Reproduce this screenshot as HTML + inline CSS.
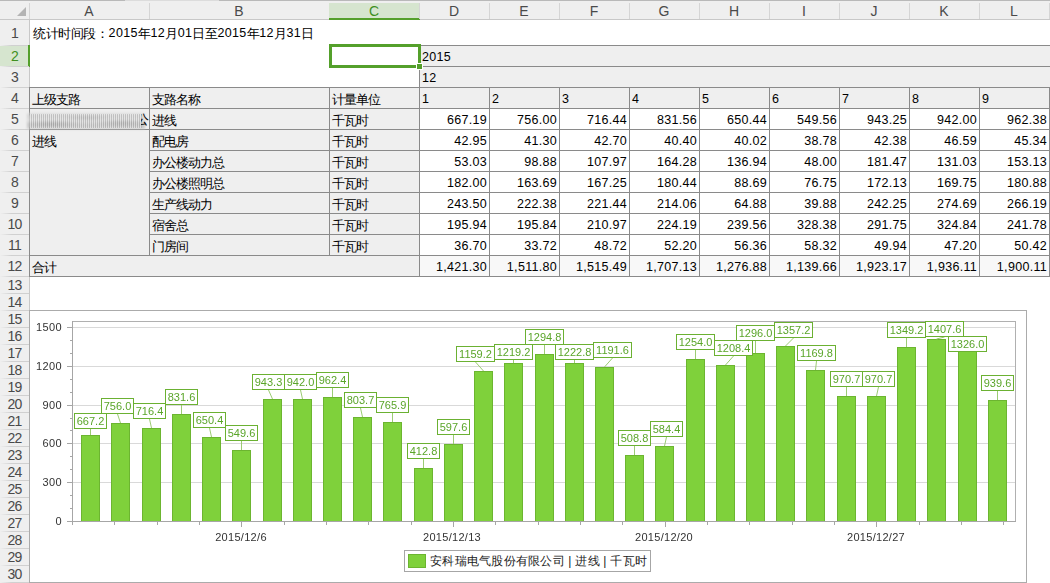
<!DOCTYPE html><html><head><meta charset="utf-8"><style>
html,body{margin:0;padding:0;} body{width:1050px;height:583px;overflow:hidden;position:relative;background:#fff;font-family:"Liberation Sans", sans-serif;}
div{box-sizing:border-box;}
.hd{color:#444;font-size:13px;}
.n{font-size:12.5px;position:relative;top:-1px;letter-spacing:0.3px;} .r1 .n{letter-spacing:0.35px;} .r1 .k{letter-spacing:-0.4px;} .k{font-size:13px;letter-spacing:-1px;}
</style></head><body>
<div style="position:absolute;left:0px;top:0px;width:1050px;height:1px;background:#b9b9b9"></div>
<div style="position:absolute;left:125px;top:0px;width:94px;height:1px;background:#dcdcdc"></div>
<div style="position:absolute;left:0px;top:1px;width:1050px;height:18px;background:#efefef"></div>
<div style="position:absolute;left:0px;top:19px;width:1050px;height:1px;background:#c8c8c8"></div>
<div style="position:absolute;left:0px;top:20px;width:29px;height:563px;background:#efefef"></div>
<div style="position:absolute;left:29px;top:20px;width:1px;height:563px;background:#c8c8c8"></div>
<div style="position:absolute;left:29px;top:3px;width:1px;height:16px;background:#d5d5d5"></div>
<svg style="position:absolute;left:17px;top:7px" width="9" height="9"><polygon points="9,0 9,9 0,9" fill="#b4b4b4"/></svg>
<div style="position:absolute;left:149px;top:3px;width:1px;height:16px;background:#d5d5d5"></div>
<div style="position:absolute;left:29px;top:2px;white-space:nowrap;color:#4a4a4a;font-size:14px;width:120px;height:19px;line-height:19px;text-align:center;">A</div>
<div style="position:absolute;left:329px;top:3px;width:1px;height:16px;background:#d5d5d5"></div>
<div style="position:absolute;left:149px;top:2px;white-space:nowrap;color:#4a4a4a;font-size:14px;width:180px;height:19px;line-height:19px;text-align:center;">B</div>
<div style="position:absolute;left:329px;top:3px;width:90px;height:15px;background:#d6e5cf"></div>
<div style="position:absolute;left:329px;top:18px;width:91px;height:2px;background:#54a02b"></div>
<div style="position:absolute;left:419px;top:3px;width:1px;height:16px;background:#d5d5d5"></div>
<div style="position:absolute;left:329px;top:2px;white-space:nowrap;color:#3f8f1f;font-size:14px;width:90px;height:19px;line-height:19px;text-align:center;">C</div>
<div style="position:absolute;left:489px;top:3px;width:1px;height:16px;background:#d5d5d5"></div>
<div style="position:absolute;left:419px;top:2px;white-space:nowrap;color:#4a4a4a;font-size:14px;width:70px;height:19px;line-height:19px;text-align:center;">D</div>
<div style="position:absolute;left:559px;top:3px;width:1px;height:16px;background:#d5d5d5"></div>
<div style="position:absolute;left:489px;top:2px;white-space:nowrap;color:#4a4a4a;font-size:14px;width:70px;height:19px;line-height:19px;text-align:center;">E</div>
<div style="position:absolute;left:629px;top:3px;width:1px;height:16px;background:#d5d5d5"></div>
<div style="position:absolute;left:559px;top:2px;white-space:nowrap;color:#4a4a4a;font-size:14px;width:70px;height:19px;line-height:19px;text-align:center;">F</div>
<div style="position:absolute;left:699px;top:3px;width:1px;height:16px;background:#d5d5d5"></div>
<div style="position:absolute;left:629px;top:2px;white-space:nowrap;color:#4a4a4a;font-size:14px;width:70px;height:19px;line-height:19px;text-align:center;">G</div>
<div style="position:absolute;left:769px;top:3px;width:1px;height:16px;background:#d5d5d5"></div>
<div style="position:absolute;left:699px;top:2px;white-space:nowrap;color:#4a4a4a;font-size:14px;width:70px;height:19px;line-height:19px;text-align:center;">H</div>
<div style="position:absolute;left:839px;top:3px;width:1px;height:16px;background:#d5d5d5"></div>
<div style="position:absolute;left:769px;top:2px;white-space:nowrap;color:#4a4a4a;font-size:14px;width:70px;height:19px;line-height:19px;text-align:center;">I</div>
<div style="position:absolute;left:909px;top:3px;width:1px;height:16px;background:#d5d5d5"></div>
<div style="position:absolute;left:839px;top:2px;white-space:nowrap;color:#4a4a4a;font-size:14px;width:70px;height:19px;line-height:19px;text-align:center;">J</div>
<div style="position:absolute;left:979px;top:3px;width:1px;height:16px;background:#d5d5d5"></div>
<div style="position:absolute;left:909px;top:2px;white-space:nowrap;color:#4a4a4a;font-size:14px;width:70px;height:19px;line-height:19px;text-align:center;">K</div>
<div style="position:absolute;left:1049px;top:3px;width:1px;height:16px;background:#d5d5d5"></div>
<div style="position:absolute;left:979px;top:2px;white-space:nowrap;color:#4a4a4a;font-size:14px;width:70px;height:19px;line-height:19px;text-align:center;">L</div>
<div style="position:absolute;left:0px;top:45px;width:29px;height:1px;background:linear-gradient(90deg,#efefef,#d0d0d0 40%,#d0d0d0)"></div>
<div style="position:absolute;left:0px;top:20px;white-space:nowrap;color:#4a4a4a;font-size:14px;letter-spacing:-0.8px;width:29px;height:26px;line-height:26px;text-align:center;">1</div>
<div style="position:absolute;left:0px;top:46px;width:28px;height:20px;background:#d6e5cf"></div>
<div style="position:absolute;left:28px;top:45px;width:2px;height:22px;background:#54a02b"></div>
<div style="position:absolute;left:0px;top:66px;width:29px;height:1px;background:linear-gradient(90deg,#efefef,#d0d0d0 40%,#d0d0d0)"></div>
<div style="position:absolute;left:0px;top:46px;white-space:nowrap;color:#3f8f1f;font-size:14px;letter-spacing:-0.8px;width:29px;height:21px;line-height:21px;text-align:center;">2</div>
<div style="position:absolute;left:0px;top:87px;width:29px;height:1px;background:linear-gradient(90deg,#efefef,#d0d0d0 40%,#d0d0d0)"></div>
<div style="position:absolute;left:0px;top:67px;white-space:nowrap;color:#4a4a4a;font-size:14px;letter-spacing:-0.8px;width:29px;height:21px;line-height:21px;text-align:center;">3</div>
<div style="position:absolute;left:0px;top:108px;width:29px;height:1px;background:linear-gradient(90deg,#efefef,#d0d0d0 40%,#d0d0d0)"></div>
<div style="position:absolute;left:0px;top:88px;white-space:nowrap;color:#4a4a4a;font-size:14px;letter-spacing:-0.8px;width:29px;height:21px;line-height:21px;text-align:center;">4</div>
<div style="position:absolute;left:0px;top:129px;width:29px;height:1px;background:linear-gradient(90deg,#efefef,#d0d0d0 40%,#d0d0d0)"></div>
<div style="position:absolute;left:0px;top:109px;white-space:nowrap;color:#4a4a4a;font-size:14px;letter-spacing:-0.8px;width:29px;height:21px;line-height:21px;text-align:center;">5</div>
<div style="position:absolute;left:0px;top:150px;width:29px;height:1px;background:linear-gradient(90deg,#efefef,#d0d0d0 40%,#d0d0d0)"></div>
<div style="position:absolute;left:0px;top:130px;white-space:nowrap;color:#4a4a4a;font-size:14px;letter-spacing:-0.8px;width:29px;height:21px;line-height:21px;text-align:center;">6</div>
<div style="position:absolute;left:0px;top:171px;width:29px;height:1px;background:linear-gradient(90deg,#efefef,#d0d0d0 40%,#d0d0d0)"></div>
<div style="position:absolute;left:0px;top:151px;white-space:nowrap;color:#4a4a4a;font-size:14px;letter-spacing:-0.8px;width:29px;height:21px;line-height:21px;text-align:center;">7</div>
<div style="position:absolute;left:0px;top:192px;width:29px;height:1px;background:linear-gradient(90deg,#efefef,#d0d0d0 40%,#d0d0d0)"></div>
<div style="position:absolute;left:0px;top:172px;white-space:nowrap;color:#4a4a4a;font-size:14px;letter-spacing:-0.8px;width:29px;height:21px;line-height:21px;text-align:center;">8</div>
<div style="position:absolute;left:0px;top:213px;width:29px;height:1px;background:linear-gradient(90deg,#efefef,#d0d0d0 40%,#d0d0d0)"></div>
<div style="position:absolute;left:0px;top:193px;white-space:nowrap;color:#4a4a4a;font-size:14px;letter-spacing:-0.8px;width:29px;height:21px;line-height:21px;text-align:center;">9</div>
<div style="position:absolute;left:0px;top:234px;width:29px;height:1px;background:linear-gradient(90deg,#efefef,#d0d0d0 40%,#d0d0d0)"></div>
<div style="position:absolute;left:0px;top:214px;white-space:nowrap;color:#4a4a4a;font-size:14px;letter-spacing:-0.8px;width:29px;height:21px;line-height:21px;text-align:center;">10</div>
<div style="position:absolute;left:0px;top:255px;width:29px;height:1px;background:linear-gradient(90deg,#efefef,#d0d0d0 40%,#d0d0d0)"></div>
<div style="position:absolute;left:0px;top:235px;white-space:nowrap;color:#4a4a4a;font-size:14px;letter-spacing:-0.8px;width:29px;height:21px;line-height:21px;text-align:center;">11</div>
<div style="position:absolute;left:0px;top:276px;width:29px;height:1px;background:linear-gradient(90deg,#efefef,#d0d0d0 40%,#d0d0d0)"></div>
<div style="position:absolute;left:0px;top:256px;white-space:nowrap;color:#4a4a4a;font-size:14px;letter-spacing:-0.8px;width:29px;height:21px;line-height:21px;text-align:center;">12</div>
<div style="position:absolute;left:0px;top:293px;width:29px;height:1px;background:linear-gradient(90deg,#efefef,#d0d0d0 40%,#d0d0d0)"></div>
<div style="position:absolute;left:0px;top:277px;white-space:nowrap;color:#4a4a4a;font-size:14px;letter-spacing:-0.8px;width:29px;height:17px;line-height:17px;text-align:center;">13</div>
<div style="position:absolute;left:0px;top:310px;width:29px;height:1px;background:linear-gradient(90deg,#efefef,#d0d0d0 40%,#d0d0d0)"></div>
<div style="position:absolute;left:0px;top:294px;white-space:nowrap;color:#4a4a4a;font-size:14px;letter-spacing:-0.8px;width:29px;height:17px;line-height:17px;text-align:center;">14</div>
<div style="position:absolute;left:0px;top:327px;width:29px;height:1px;background:linear-gradient(90deg,#efefef,#d0d0d0 40%,#d0d0d0)"></div>
<div style="position:absolute;left:0px;top:311px;white-space:nowrap;color:#4a4a4a;font-size:14px;letter-spacing:-0.8px;width:29px;height:17px;line-height:17px;text-align:center;">15</div>
<div style="position:absolute;left:0px;top:344px;width:29px;height:1px;background:linear-gradient(90deg,#efefef,#d0d0d0 40%,#d0d0d0)"></div>
<div style="position:absolute;left:0px;top:328px;white-space:nowrap;color:#4a4a4a;font-size:14px;letter-spacing:-0.8px;width:29px;height:17px;line-height:17px;text-align:center;">16</div>
<div style="position:absolute;left:0px;top:361px;width:29px;height:1px;background:linear-gradient(90deg,#efefef,#d0d0d0 40%,#d0d0d0)"></div>
<div style="position:absolute;left:0px;top:345px;white-space:nowrap;color:#4a4a4a;font-size:14px;letter-spacing:-0.8px;width:29px;height:17px;line-height:17px;text-align:center;">17</div>
<div style="position:absolute;left:0px;top:378px;width:29px;height:1px;background:linear-gradient(90deg,#efefef,#d0d0d0 40%,#d0d0d0)"></div>
<div style="position:absolute;left:0px;top:362px;white-space:nowrap;color:#4a4a4a;font-size:14px;letter-spacing:-0.8px;width:29px;height:17px;line-height:17px;text-align:center;">18</div>
<div style="position:absolute;left:0px;top:395px;width:29px;height:1px;background:linear-gradient(90deg,#efefef,#d0d0d0 40%,#d0d0d0)"></div>
<div style="position:absolute;left:0px;top:379px;white-space:nowrap;color:#4a4a4a;font-size:14px;letter-spacing:-0.8px;width:29px;height:17px;line-height:17px;text-align:center;">19</div>
<div style="position:absolute;left:0px;top:412px;width:29px;height:1px;background:linear-gradient(90deg,#efefef,#d0d0d0 40%,#d0d0d0)"></div>
<div style="position:absolute;left:0px;top:396px;white-space:nowrap;color:#4a4a4a;font-size:14px;letter-spacing:-0.8px;width:29px;height:17px;line-height:17px;text-align:center;">20</div>
<div style="position:absolute;left:0px;top:429px;width:29px;height:1px;background:linear-gradient(90deg,#efefef,#d0d0d0 40%,#d0d0d0)"></div>
<div style="position:absolute;left:0px;top:413px;white-space:nowrap;color:#4a4a4a;font-size:14px;letter-spacing:-0.8px;width:29px;height:17px;line-height:17px;text-align:center;">21</div>
<div style="position:absolute;left:0px;top:446px;width:29px;height:1px;background:linear-gradient(90deg,#efefef,#d0d0d0 40%,#d0d0d0)"></div>
<div style="position:absolute;left:0px;top:430px;white-space:nowrap;color:#4a4a4a;font-size:14px;letter-spacing:-0.8px;width:29px;height:17px;line-height:17px;text-align:center;">22</div>
<div style="position:absolute;left:0px;top:463px;width:29px;height:1px;background:linear-gradient(90deg,#efefef,#d0d0d0 40%,#d0d0d0)"></div>
<div style="position:absolute;left:0px;top:447px;white-space:nowrap;color:#4a4a4a;font-size:14px;letter-spacing:-0.8px;width:29px;height:17px;line-height:17px;text-align:center;">23</div>
<div style="position:absolute;left:0px;top:480px;width:29px;height:1px;background:linear-gradient(90deg,#efefef,#d0d0d0 40%,#d0d0d0)"></div>
<div style="position:absolute;left:0px;top:464px;white-space:nowrap;color:#4a4a4a;font-size:14px;letter-spacing:-0.8px;width:29px;height:17px;line-height:17px;text-align:center;">24</div>
<div style="position:absolute;left:0px;top:497px;width:29px;height:1px;background:linear-gradient(90deg,#efefef,#d0d0d0 40%,#d0d0d0)"></div>
<div style="position:absolute;left:0px;top:481px;white-space:nowrap;color:#4a4a4a;font-size:14px;letter-spacing:-0.8px;width:29px;height:17px;line-height:17px;text-align:center;">25</div>
<div style="position:absolute;left:0px;top:514px;width:29px;height:1px;background:linear-gradient(90deg,#efefef,#d0d0d0 40%,#d0d0d0)"></div>
<div style="position:absolute;left:0px;top:498px;white-space:nowrap;color:#4a4a4a;font-size:14px;letter-spacing:-0.8px;width:29px;height:17px;line-height:17px;text-align:center;">26</div>
<div style="position:absolute;left:0px;top:531px;width:29px;height:1px;background:linear-gradient(90deg,#efefef,#d0d0d0 40%,#d0d0d0)"></div>
<div style="position:absolute;left:0px;top:515px;white-space:nowrap;color:#4a4a4a;font-size:14px;letter-spacing:-0.8px;width:29px;height:17px;line-height:17px;text-align:center;">27</div>
<div style="position:absolute;left:0px;top:548px;width:29px;height:1px;background:linear-gradient(90deg,#efefef,#d0d0d0 40%,#d0d0d0)"></div>
<div style="position:absolute;left:0px;top:532px;white-space:nowrap;color:#4a4a4a;font-size:14px;letter-spacing:-0.8px;width:29px;height:17px;line-height:17px;text-align:center;">28</div>
<div style="position:absolute;left:0px;top:565px;width:29px;height:1px;background:linear-gradient(90deg,#efefef,#d0d0d0 40%,#d0d0d0)"></div>
<div style="position:absolute;left:0px;top:549px;white-space:nowrap;color:#4a4a4a;font-size:14px;letter-spacing:-0.8px;width:29px;height:17px;line-height:17px;text-align:center;">29</div>
<div style="position:absolute;left:0px;top:582px;width:29px;height:1px;background:linear-gradient(90deg,#efefef,#d0d0d0 40%,#d0d0d0)"></div>
<div style="position:absolute;left:0px;top:566px;white-space:nowrap;color:#4a4a4a;font-size:14px;letter-spacing:-0.8px;width:29px;height:17px;line-height:17px;text-align:center;">30</div>
<div style="position:absolute;left:419px;top:45px;width:640px;height:22px;background:#efefef;border:1px solid #8a8a8a"></div>
<div style="position:absolute;left:419px;top:66px;width:640px;height:22px;background:#efefef;border:1px solid #8a8a8a"></div>
<div style="position:absolute;left:29px;top:87px;width:121px;height:22px;background:#efefef;border:1px solid #8a8a8a"></div>
<div style="position:absolute;left:149px;top:87px;width:181px;height:22px;background:#efefef;border:1px solid #8a8a8a"></div>
<div style="position:absolute;left:329px;top:87px;width:91px;height:22px;background:#efefef;border:1px solid #8a8a8a"></div>
<div style="position:absolute;left:419px;top:87px;width:71px;height:22px;background:#efefef;border:1px solid #8a8a8a"></div>
<div style="position:absolute;left:489px;top:87px;width:71px;height:22px;background:#efefef;border:1px solid #8a8a8a"></div>
<div style="position:absolute;left:559px;top:87px;width:71px;height:22px;background:#efefef;border:1px solid #8a8a8a"></div>
<div style="position:absolute;left:629px;top:87px;width:71px;height:22px;background:#efefef;border:1px solid #8a8a8a"></div>
<div style="position:absolute;left:699px;top:87px;width:71px;height:22px;background:#efefef;border:1px solid #8a8a8a"></div>
<div style="position:absolute;left:769px;top:87px;width:71px;height:22px;background:#efefef;border:1px solid #8a8a8a"></div>
<div style="position:absolute;left:839px;top:87px;width:71px;height:22px;background:#efefef;border:1px solid #8a8a8a"></div>
<div style="position:absolute;left:909px;top:87px;width:71px;height:22px;background:#efefef;border:1px solid #8a8a8a"></div>
<div style="position:absolute;left:979px;top:87px;width:71px;height:22px;background:#efefef;border:1px solid #8a8a8a"></div>
<div style="position:absolute;left:29px;top:108px;width:121px;height:22px;background:#efefef;border:1px solid #8a8a8a"></div>
<div style="position:absolute;left:29px;top:129px;width:121px;height:127px;background:#efefef;border:1px solid #8a8a8a"></div>
<div style="position:absolute;left:149px;top:108px;width:181px;height:22px;background:#efefef;border:1px solid #8a8a8a"></div>
<div style="position:absolute;left:329px;top:108px;width:91px;height:22px;background:#efefef;border:1px solid #8a8a8a"></div>
<div style="position:absolute;left:419px;top:108px;width:71px;height:22px;background:#fff;border:1px solid #8a8a8a"></div>
<div style="position:absolute;left:489px;top:108px;width:71px;height:22px;background:#fff;border:1px solid #8a8a8a"></div>
<div style="position:absolute;left:559px;top:108px;width:71px;height:22px;background:#fff;border:1px solid #8a8a8a"></div>
<div style="position:absolute;left:629px;top:108px;width:71px;height:22px;background:#fff;border:1px solid #8a8a8a"></div>
<div style="position:absolute;left:699px;top:108px;width:71px;height:22px;background:#fff;border:1px solid #8a8a8a"></div>
<div style="position:absolute;left:769px;top:108px;width:71px;height:22px;background:#fff;border:1px solid #8a8a8a"></div>
<div style="position:absolute;left:839px;top:108px;width:71px;height:22px;background:#fff;border:1px solid #8a8a8a"></div>
<div style="position:absolute;left:909px;top:108px;width:71px;height:22px;background:#fff;border:1px solid #8a8a8a"></div>
<div style="position:absolute;left:979px;top:108px;width:71px;height:22px;background:#fff;border:1px solid #8a8a8a"></div>
<div style="position:absolute;left:149px;top:129px;width:181px;height:22px;background:#efefef;border:1px solid #8a8a8a"></div>
<div style="position:absolute;left:329px;top:129px;width:91px;height:22px;background:#efefef;border:1px solid #8a8a8a"></div>
<div style="position:absolute;left:419px;top:129px;width:71px;height:22px;background:#fff;border:1px solid #8a8a8a"></div>
<div style="position:absolute;left:489px;top:129px;width:71px;height:22px;background:#fff;border:1px solid #8a8a8a"></div>
<div style="position:absolute;left:559px;top:129px;width:71px;height:22px;background:#fff;border:1px solid #8a8a8a"></div>
<div style="position:absolute;left:629px;top:129px;width:71px;height:22px;background:#fff;border:1px solid #8a8a8a"></div>
<div style="position:absolute;left:699px;top:129px;width:71px;height:22px;background:#fff;border:1px solid #8a8a8a"></div>
<div style="position:absolute;left:769px;top:129px;width:71px;height:22px;background:#fff;border:1px solid #8a8a8a"></div>
<div style="position:absolute;left:839px;top:129px;width:71px;height:22px;background:#fff;border:1px solid #8a8a8a"></div>
<div style="position:absolute;left:909px;top:129px;width:71px;height:22px;background:#fff;border:1px solid #8a8a8a"></div>
<div style="position:absolute;left:979px;top:129px;width:71px;height:22px;background:#fff;border:1px solid #8a8a8a"></div>
<div style="position:absolute;left:149px;top:150px;width:181px;height:22px;background:#efefef;border:1px solid #8a8a8a"></div>
<div style="position:absolute;left:329px;top:150px;width:91px;height:22px;background:#efefef;border:1px solid #8a8a8a"></div>
<div style="position:absolute;left:419px;top:150px;width:71px;height:22px;background:#fff;border:1px solid #8a8a8a"></div>
<div style="position:absolute;left:489px;top:150px;width:71px;height:22px;background:#fff;border:1px solid #8a8a8a"></div>
<div style="position:absolute;left:559px;top:150px;width:71px;height:22px;background:#fff;border:1px solid #8a8a8a"></div>
<div style="position:absolute;left:629px;top:150px;width:71px;height:22px;background:#fff;border:1px solid #8a8a8a"></div>
<div style="position:absolute;left:699px;top:150px;width:71px;height:22px;background:#fff;border:1px solid #8a8a8a"></div>
<div style="position:absolute;left:769px;top:150px;width:71px;height:22px;background:#fff;border:1px solid #8a8a8a"></div>
<div style="position:absolute;left:839px;top:150px;width:71px;height:22px;background:#fff;border:1px solid #8a8a8a"></div>
<div style="position:absolute;left:909px;top:150px;width:71px;height:22px;background:#fff;border:1px solid #8a8a8a"></div>
<div style="position:absolute;left:979px;top:150px;width:71px;height:22px;background:#fff;border:1px solid #8a8a8a"></div>
<div style="position:absolute;left:149px;top:171px;width:181px;height:22px;background:#efefef;border:1px solid #8a8a8a"></div>
<div style="position:absolute;left:329px;top:171px;width:91px;height:22px;background:#efefef;border:1px solid #8a8a8a"></div>
<div style="position:absolute;left:419px;top:171px;width:71px;height:22px;background:#fff;border:1px solid #8a8a8a"></div>
<div style="position:absolute;left:489px;top:171px;width:71px;height:22px;background:#fff;border:1px solid #8a8a8a"></div>
<div style="position:absolute;left:559px;top:171px;width:71px;height:22px;background:#fff;border:1px solid #8a8a8a"></div>
<div style="position:absolute;left:629px;top:171px;width:71px;height:22px;background:#fff;border:1px solid #8a8a8a"></div>
<div style="position:absolute;left:699px;top:171px;width:71px;height:22px;background:#fff;border:1px solid #8a8a8a"></div>
<div style="position:absolute;left:769px;top:171px;width:71px;height:22px;background:#fff;border:1px solid #8a8a8a"></div>
<div style="position:absolute;left:839px;top:171px;width:71px;height:22px;background:#fff;border:1px solid #8a8a8a"></div>
<div style="position:absolute;left:909px;top:171px;width:71px;height:22px;background:#fff;border:1px solid #8a8a8a"></div>
<div style="position:absolute;left:979px;top:171px;width:71px;height:22px;background:#fff;border:1px solid #8a8a8a"></div>
<div style="position:absolute;left:149px;top:192px;width:181px;height:22px;background:#efefef;border:1px solid #8a8a8a"></div>
<div style="position:absolute;left:329px;top:192px;width:91px;height:22px;background:#efefef;border:1px solid #8a8a8a"></div>
<div style="position:absolute;left:419px;top:192px;width:71px;height:22px;background:#fff;border:1px solid #8a8a8a"></div>
<div style="position:absolute;left:489px;top:192px;width:71px;height:22px;background:#fff;border:1px solid #8a8a8a"></div>
<div style="position:absolute;left:559px;top:192px;width:71px;height:22px;background:#fff;border:1px solid #8a8a8a"></div>
<div style="position:absolute;left:629px;top:192px;width:71px;height:22px;background:#fff;border:1px solid #8a8a8a"></div>
<div style="position:absolute;left:699px;top:192px;width:71px;height:22px;background:#fff;border:1px solid #8a8a8a"></div>
<div style="position:absolute;left:769px;top:192px;width:71px;height:22px;background:#fff;border:1px solid #8a8a8a"></div>
<div style="position:absolute;left:839px;top:192px;width:71px;height:22px;background:#fff;border:1px solid #8a8a8a"></div>
<div style="position:absolute;left:909px;top:192px;width:71px;height:22px;background:#fff;border:1px solid #8a8a8a"></div>
<div style="position:absolute;left:979px;top:192px;width:71px;height:22px;background:#fff;border:1px solid #8a8a8a"></div>
<div style="position:absolute;left:149px;top:213px;width:181px;height:22px;background:#efefef;border:1px solid #8a8a8a"></div>
<div style="position:absolute;left:329px;top:213px;width:91px;height:22px;background:#efefef;border:1px solid #8a8a8a"></div>
<div style="position:absolute;left:419px;top:213px;width:71px;height:22px;background:#fff;border:1px solid #8a8a8a"></div>
<div style="position:absolute;left:489px;top:213px;width:71px;height:22px;background:#fff;border:1px solid #8a8a8a"></div>
<div style="position:absolute;left:559px;top:213px;width:71px;height:22px;background:#fff;border:1px solid #8a8a8a"></div>
<div style="position:absolute;left:629px;top:213px;width:71px;height:22px;background:#fff;border:1px solid #8a8a8a"></div>
<div style="position:absolute;left:699px;top:213px;width:71px;height:22px;background:#fff;border:1px solid #8a8a8a"></div>
<div style="position:absolute;left:769px;top:213px;width:71px;height:22px;background:#fff;border:1px solid #8a8a8a"></div>
<div style="position:absolute;left:839px;top:213px;width:71px;height:22px;background:#fff;border:1px solid #8a8a8a"></div>
<div style="position:absolute;left:909px;top:213px;width:71px;height:22px;background:#fff;border:1px solid #8a8a8a"></div>
<div style="position:absolute;left:979px;top:213px;width:71px;height:22px;background:#fff;border:1px solid #8a8a8a"></div>
<div style="position:absolute;left:149px;top:234px;width:181px;height:22px;background:#efefef;border:1px solid #8a8a8a"></div>
<div style="position:absolute;left:329px;top:234px;width:91px;height:22px;background:#efefef;border:1px solid #8a8a8a"></div>
<div style="position:absolute;left:419px;top:234px;width:71px;height:22px;background:#fff;border:1px solid #8a8a8a"></div>
<div style="position:absolute;left:489px;top:234px;width:71px;height:22px;background:#fff;border:1px solid #8a8a8a"></div>
<div style="position:absolute;left:559px;top:234px;width:71px;height:22px;background:#fff;border:1px solid #8a8a8a"></div>
<div style="position:absolute;left:629px;top:234px;width:71px;height:22px;background:#fff;border:1px solid #8a8a8a"></div>
<div style="position:absolute;left:699px;top:234px;width:71px;height:22px;background:#fff;border:1px solid #8a8a8a"></div>
<div style="position:absolute;left:769px;top:234px;width:71px;height:22px;background:#fff;border:1px solid #8a8a8a"></div>
<div style="position:absolute;left:839px;top:234px;width:71px;height:22px;background:#fff;border:1px solid #8a8a8a"></div>
<div style="position:absolute;left:909px;top:234px;width:71px;height:22px;background:#fff;border:1px solid #8a8a8a"></div>
<div style="position:absolute;left:979px;top:234px;width:71px;height:22px;background:#fff;border:1px solid #8a8a8a"></div>
<div style="position:absolute;left:29px;top:255px;width:391px;height:22px;background:#efefef;border:1px solid #8a8a8a"></div>
<div style="position:absolute;left:419px;top:255px;width:71px;height:22px;background:#f8f8f8;border:1px solid #8a8a8a"></div>
<div style="position:absolute;left:489px;top:255px;width:71px;height:22px;background:#f8f8f8;border:1px solid #8a8a8a"></div>
<div style="position:absolute;left:559px;top:255px;width:71px;height:22px;background:#f8f8f8;border:1px solid #8a8a8a"></div>
<div style="position:absolute;left:629px;top:255px;width:71px;height:22px;background:#f8f8f8;border:1px solid #8a8a8a"></div>
<div style="position:absolute;left:699px;top:255px;width:71px;height:22px;background:#f8f8f8;border:1px solid #8a8a8a"></div>
<div style="position:absolute;left:769px;top:255px;width:71px;height:22px;background:#f8f8f8;border:1px solid #8a8a8a"></div>
<div style="position:absolute;left:839px;top:255px;width:71px;height:22px;background:#f8f8f8;border:1px solid #8a8a8a"></div>
<div style="position:absolute;left:909px;top:255px;width:71px;height:22px;background:#f8f8f8;border:1px solid #8a8a8a"></div>
<div style="position:absolute;left:979px;top:255px;width:71px;height:22px;background:#f8f8f8;border:1px solid #8a8a8a"></div>
<div class="r1" style="position:absolute;left:33px;top:20px;height:25px;line-height:25px;white-space:nowrap;color:#000"><span class="k">统计时间段：</span><span class="n">2015</span><span class="k">年</span><span class="n">12</span><span class="k">月</span><span class="n">01</span><span class="k">日至</span><span class="n">2015</span><span class="k">年</span><span class="n">12</span><span class="k">月</span><span class="n">31</span><span class="k">日</span></div>
<div style="position:absolute;left:422px;top:46px;white-space:nowrap;color:#000;height:21px;line-height:21px;"><span class="n">2015</span></div>
<div style="position:absolute;left:422px;top:67px;white-space:nowrap;color:#000;height:21px;line-height:21px;"><span class="n">12</span></div>
<div style="position:absolute;left:32px;top:88px;white-space:nowrap;color:#000;height:21px;line-height:21px;"><span class="k">上级支路</span></div>
<div style="position:absolute;left:152px;top:88px;white-space:nowrap;color:#000;height:21px;line-height:21px;"><span class="k">支路名称</span></div>
<div style="position:absolute;left:332px;top:88px;white-space:nowrap;color:#000;height:21px;line-height:21px;"><span class="k">计量单位</span></div>
<div style="position:absolute;left:422px;top:88px;white-space:nowrap;color:#000;height:21px;line-height:21px;"><span class="n">1</span></div>
<div style="position:absolute;left:492px;top:88px;white-space:nowrap;color:#000;height:21px;line-height:21px;"><span class="n">2</span></div>
<div style="position:absolute;left:562px;top:88px;white-space:nowrap;color:#000;height:21px;line-height:21px;"><span class="n">3</span></div>
<div style="position:absolute;left:632px;top:88px;white-space:nowrap;color:#000;height:21px;line-height:21px;"><span class="n">4</span></div>
<div style="position:absolute;left:702px;top:88px;white-space:nowrap;color:#000;height:21px;line-height:21px;"><span class="n">5</span></div>
<div style="position:absolute;left:772px;top:88px;white-space:nowrap;color:#000;height:21px;line-height:21px;"><span class="n">6</span></div>
<div style="position:absolute;left:842px;top:88px;white-space:nowrap;color:#000;height:21px;line-height:21px;"><span class="n">7</span></div>
<div style="position:absolute;left:912px;top:88px;white-space:nowrap;color:#000;height:21px;line-height:21px;"><span class="n">8</span></div>
<div style="position:absolute;left:982px;top:88px;white-space:nowrap;color:#000;height:21px;line-height:21px;"><span class="n">9</span></div>
<div style="position:absolute;left:152px;top:109px;white-space:nowrap;color:#000;height:21px;line-height:21px;"><span class="k">进线</span></div>
<div style="position:absolute;left:332px;top:109px;white-space:nowrap;color:#000;height:21px;line-height:21px;"><span class="k">千瓦时</span></div>
<div style="position:absolute;left:152px;top:130px;white-space:nowrap;color:#000;height:21px;line-height:21px;"><span class="k">配电房</span></div>
<div style="position:absolute;left:332px;top:130px;white-space:nowrap;color:#000;height:21px;line-height:21px;"><span class="k">千瓦时</span></div>
<div style="position:absolute;left:152px;top:151px;white-space:nowrap;color:#000;height:21px;line-height:21px;"><span class="k">办公楼动力总</span></div>
<div style="position:absolute;left:332px;top:151px;white-space:nowrap;color:#000;height:21px;line-height:21px;"><span class="k">千瓦时</span></div>
<div style="position:absolute;left:152px;top:172px;white-space:nowrap;color:#000;height:21px;line-height:21px;"><span class="k">办公楼照明总</span></div>
<div style="position:absolute;left:332px;top:172px;white-space:nowrap;color:#000;height:21px;line-height:21px;"><span class="k">千瓦时</span></div>
<div style="position:absolute;left:152px;top:193px;white-space:nowrap;color:#000;height:21px;line-height:21px;"><span class="k">生产线动力</span></div>
<div style="position:absolute;left:332px;top:193px;white-space:nowrap;color:#000;height:21px;line-height:21px;"><span class="k">千瓦时</span></div>
<div style="position:absolute;left:152px;top:214px;white-space:nowrap;color:#000;height:21px;line-height:21px;"><span class="k">宿舍总</span></div>
<div style="position:absolute;left:332px;top:214px;white-space:nowrap;color:#000;height:21px;line-height:21px;"><span class="k">千瓦时</span></div>
<div style="position:absolute;left:152px;top:235px;white-space:nowrap;color:#000;height:21px;line-height:21px;"><span class="k">门房间</span></div>
<div style="position:absolute;left:332px;top:235px;white-space:nowrap;color:#000;height:21px;line-height:21px;"><span class="k">千瓦时</span></div>
<div style="position:absolute;left:32px;top:130px;white-space:nowrap;color:#000;height:21px;line-height:21px;"><span class="k">进线</span></div>
<div style="position:absolute;left:32px;top:256px;white-space:nowrap;color:#000;height:21px;line-height:21px;"><span class="k">合计</span></div>
<div style="position:absolute;left:419px;top:109px;white-space:nowrap;color:#000;width:68px;height:21px;line-height:21px;text-align:right;"><span class="n">667.19</span></div>
<div style="position:absolute;left:489px;top:109px;white-space:nowrap;color:#000;width:68px;height:21px;line-height:21px;text-align:right;"><span class="n">756.00</span></div>
<div style="position:absolute;left:559px;top:109px;white-space:nowrap;color:#000;width:68px;height:21px;line-height:21px;text-align:right;"><span class="n">716.44</span></div>
<div style="position:absolute;left:629px;top:109px;white-space:nowrap;color:#000;width:68px;height:21px;line-height:21px;text-align:right;"><span class="n">831.56</span></div>
<div style="position:absolute;left:699px;top:109px;white-space:nowrap;color:#000;width:68px;height:21px;line-height:21px;text-align:right;"><span class="n">650.44</span></div>
<div style="position:absolute;left:769px;top:109px;white-space:nowrap;color:#000;width:68px;height:21px;line-height:21px;text-align:right;"><span class="n">549.56</span></div>
<div style="position:absolute;left:839px;top:109px;white-space:nowrap;color:#000;width:68px;height:21px;line-height:21px;text-align:right;"><span class="n">943.25</span></div>
<div style="position:absolute;left:909px;top:109px;white-space:nowrap;color:#000;width:68px;height:21px;line-height:21px;text-align:right;"><span class="n">942.00</span></div>
<div style="position:absolute;left:979px;top:109px;white-space:nowrap;color:#000;width:68px;height:21px;line-height:21px;text-align:right;"><span class="n">962.38</span></div>
<div style="position:absolute;left:419px;top:130px;white-space:nowrap;color:#000;width:68px;height:21px;line-height:21px;text-align:right;"><span class="n">42.95</span></div>
<div style="position:absolute;left:489px;top:130px;white-space:nowrap;color:#000;width:68px;height:21px;line-height:21px;text-align:right;"><span class="n">41.30</span></div>
<div style="position:absolute;left:559px;top:130px;white-space:nowrap;color:#000;width:68px;height:21px;line-height:21px;text-align:right;"><span class="n">42.70</span></div>
<div style="position:absolute;left:629px;top:130px;white-space:nowrap;color:#000;width:68px;height:21px;line-height:21px;text-align:right;"><span class="n">40.40</span></div>
<div style="position:absolute;left:699px;top:130px;white-space:nowrap;color:#000;width:68px;height:21px;line-height:21px;text-align:right;"><span class="n">40.02</span></div>
<div style="position:absolute;left:769px;top:130px;white-space:nowrap;color:#000;width:68px;height:21px;line-height:21px;text-align:right;"><span class="n">38.78</span></div>
<div style="position:absolute;left:839px;top:130px;white-space:nowrap;color:#000;width:68px;height:21px;line-height:21px;text-align:right;"><span class="n">42.38</span></div>
<div style="position:absolute;left:909px;top:130px;white-space:nowrap;color:#000;width:68px;height:21px;line-height:21px;text-align:right;"><span class="n">46.59</span></div>
<div style="position:absolute;left:979px;top:130px;white-space:nowrap;color:#000;width:68px;height:21px;line-height:21px;text-align:right;"><span class="n">45.34</span></div>
<div style="position:absolute;left:419px;top:151px;white-space:nowrap;color:#000;width:68px;height:21px;line-height:21px;text-align:right;"><span class="n">53.03</span></div>
<div style="position:absolute;left:489px;top:151px;white-space:nowrap;color:#000;width:68px;height:21px;line-height:21px;text-align:right;"><span class="n">98.88</span></div>
<div style="position:absolute;left:559px;top:151px;white-space:nowrap;color:#000;width:68px;height:21px;line-height:21px;text-align:right;"><span class="n">107.97</span></div>
<div style="position:absolute;left:629px;top:151px;white-space:nowrap;color:#000;width:68px;height:21px;line-height:21px;text-align:right;"><span class="n">164.28</span></div>
<div style="position:absolute;left:699px;top:151px;white-space:nowrap;color:#000;width:68px;height:21px;line-height:21px;text-align:right;"><span class="n">136.94</span></div>
<div style="position:absolute;left:769px;top:151px;white-space:nowrap;color:#000;width:68px;height:21px;line-height:21px;text-align:right;"><span class="n">48.00</span></div>
<div style="position:absolute;left:839px;top:151px;white-space:nowrap;color:#000;width:68px;height:21px;line-height:21px;text-align:right;"><span class="n">181.47</span></div>
<div style="position:absolute;left:909px;top:151px;white-space:nowrap;color:#000;width:68px;height:21px;line-height:21px;text-align:right;"><span class="n">131.03</span></div>
<div style="position:absolute;left:979px;top:151px;white-space:nowrap;color:#000;width:68px;height:21px;line-height:21px;text-align:right;"><span class="n">153.13</span></div>
<div style="position:absolute;left:419px;top:172px;white-space:nowrap;color:#000;width:68px;height:21px;line-height:21px;text-align:right;"><span class="n">182.00</span></div>
<div style="position:absolute;left:489px;top:172px;white-space:nowrap;color:#000;width:68px;height:21px;line-height:21px;text-align:right;"><span class="n">163.69</span></div>
<div style="position:absolute;left:559px;top:172px;white-space:nowrap;color:#000;width:68px;height:21px;line-height:21px;text-align:right;"><span class="n">167.25</span></div>
<div style="position:absolute;left:629px;top:172px;white-space:nowrap;color:#000;width:68px;height:21px;line-height:21px;text-align:right;"><span class="n">180.44</span></div>
<div style="position:absolute;left:699px;top:172px;white-space:nowrap;color:#000;width:68px;height:21px;line-height:21px;text-align:right;"><span class="n">88.69</span></div>
<div style="position:absolute;left:769px;top:172px;white-space:nowrap;color:#000;width:68px;height:21px;line-height:21px;text-align:right;"><span class="n">76.75</span></div>
<div style="position:absolute;left:839px;top:172px;white-space:nowrap;color:#000;width:68px;height:21px;line-height:21px;text-align:right;"><span class="n">172.13</span></div>
<div style="position:absolute;left:909px;top:172px;white-space:nowrap;color:#000;width:68px;height:21px;line-height:21px;text-align:right;"><span class="n">169.75</span></div>
<div style="position:absolute;left:979px;top:172px;white-space:nowrap;color:#000;width:68px;height:21px;line-height:21px;text-align:right;"><span class="n">180.88</span></div>
<div style="position:absolute;left:419px;top:193px;white-space:nowrap;color:#000;width:68px;height:21px;line-height:21px;text-align:right;"><span class="n">243.50</span></div>
<div style="position:absolute;left:489px;top:193px;white-space:nowrap;color:#000;width:68px;height:21px;line-height:21px;text-align:right;"><span class="n">222.38</span></div>
<div style="position:absolute;left:559px;top:193px;white-space:nowrap;color:#000;width:68px;height:21px;line-height:21px;text-align:right;"><span class="n">221.44</span></div>
<div style="position:absolute;left:629px;top:193px;white-space:nowrap;color:#000;width:68px;height:21px;line-height:21px;text-align:right;"><span class="n">214.06</span></div>
<div style="position:absolute;left:699px;top:193px;white-space:nowrap;color:#000;width:68px;height:21px;line-height:21px;text-align:right;"><span class="n">64.88</span></div>
<div style="position:absolute;left:769px;top:193px;white-space:nowrap;color:#000;width:68px;height:21px;line-height:21px;text-align:right;"><span class="n">39.88</span></div>
<div style="position:absolute;left:839px;top:193px;white-space:nowrap;color:#000;width:68px;height:21px;line-height:21px;text-align:right;"><span class="n">242.25</span></div>
<div style="position:absolute;left:909px;top:193px;white-space:nowrap;color:#000;width:68px;height:21px;line-height:21px;text-align:right;"><span class="n">274.69</span></div>
<div style="position:absolute;left:979px;top:193px;white-space:nowrap;color:#000;width:68px;height:21px;line-height:21px;text-align:right;"><span class="n">266.19</span></div>
<div style="position:absolute;left:419px;top:214px;white-space:nowrap;color:#000;width:68px;height:21px;line-height:21px;text-align:right;"><span class="n">195.94</span></div>
<div style="position:absolute;left:489px;top:214px;white-space:nowrap;color:#000;width:68px;height:21px;line-height:21px;text-align:right;"><span class="n">195.84</span></div>
<div style="position:absolute;left:559px;top:214px;white-space:nowrap;color:#000;width:68px;height:21px;line-height:21px;text-align:right;"><span class="n">210.97</span></div>
<div style="position:absolute;left:629px;top:214px;white-space:nowrap;color:#000;width:68px;height:21px;line-height:21px;text-align:right;"><span class="n">224.19</span></div>
<div style="position:absolute;left:699px;top:214px;white-space:nowrap;color:#000;width:68px;height:21px;line-height:21px;text-align:right;"><span class="n">239.56</span></div>
<div style="position:absolute;left:769px;top:214px;white-space:nowrap;color:#000;width:68px;height:21px;line-height:21px;text-align:right;"><span class="n">328.38</span></div>
<div style="position:absolute;left:839px;top:214px;white-space:nowrap;color:#000;width:68px;height:21px;line-height:21px;text-align:right;"><span class="n">291.75</span></div>
<div style="position:absolute;left:909px;top:214px;white-space:nowrap;color:#000;width:68px;height:21px;line-height:21px;text-align:right;"><span class="n">324.84</span></div>
<div style="position:absolute;left:979px;top:214px;white-space:nowrap;color:#000;width:68px;height:21px;line-height:21px;text-align:right;"><span class="n">241.78</span></div>
<div style="position:absolute;left:419px;top:235px;white-space:nowrap;color:#000;width:68px;height:21px;line-height:21px;text-align:right;"><span class="n">36.70</span></div>
<div style="position:absolute;left:489px;top:235px;white-space:nowrap;color:#000;width:68px;height:21px;line-height:21px;text-align:right;"><span class="n">33.72</span></div>
<div style="position:absolute;left:559px;top:235px;white-space:nowrap;color:#000;width:68px;height:21px;line-height:21px;text-align:right;"><span class="n">48.72</span></div>
<div style="position:absolute;left:629px;top:235px;white-space:nowrap;color:#000;width:68px;height:21px;line-height:21px;text-align:right;"><span class="n">52.20</span></div>
<div style="position:absolute;left:699px;top:235px;white-space:nowrap;color:#000;width:68px;height:21px;line-height:21px;text-align:right;"><span class="n">56.36</span></div>
<div style="position:absolute;left:769px;top:235px;white-space:nowrap;color:#000;width:68px;height:21px;line-height:21px;text-align:right;"><span class="n">58.32</span></div>
<div style="position:absolute;left:839px;top:235px;white-space:nowrap;color:#000;width:68px;height:21px;line-height:21px;text-align:right;"><span class="n">49.94</span></div>
<div style="position:absolute;left:909px;top:235px;white-space:nowrap;color:#000;width:68px;height:21px;line-height:21px;text-align:right;"><span class="n">47.20</span></div>
<div style="position:absolute;left:979px;top:235px;white-space:nowrap;color:#000;width:68px;height:21px;line-height:21px;text-align:right;"><span class="n">50.42</span></div>
<div style="position:absolute;left:419px;top:256px;white-space:nowrap;color:#000;width:68px;height:21px;line-height:21px;text-align:right;"><span class="n">1,421.30</span></div>
<div style="position:absolute;left:489px;top:256px;white-space:nowrap;color:#000;width:68px;height:21px;line-height:21px;text-align:right;"><span class="n">1,511.80</span></div>
<div style="position:absolute;left:559px;top:256px;white-space:nowrap;color:#000;width:68px;height:21px;line-height:21px;text-align:right;"><span class="n">1,515.49</span></div>
<div style="position:absolute;left:629px;top:256px;white-space:nowrap;color:#000;width:68px;height:21px;line-height:21px;text-align:right;"><span class="n">1,707.13</span></div>
<div style="position:absolute;left:699px;top:256px;white-space:nowrap;color:#000;width:68px;height:21px;line-height:21px;text-align:right;"><span class="n">1,276.88</span></div>
<div style="position:absolute;left:769px;top:256px;white-space:nowrap;color:#000;width:68px;height:21px;line-height:21px;text-align:right;"><span class="n">1,139.66</span></div>
<div style="position:absolute;left:839px;top:256px;white-space:nowrap;color:#000;width:68px;height:21px;line-height:21px;text-align:right;"><span class="n">1,923.17</span></div>
<div style="position:absolute;left:909px;top:256px;white-space:nowrap;color:#000;width:68px;height:21px;line-height:21px;text-align:right;"><span class="n">1,936.11</span></div>
<div style="position:absolute;left:979px;top:256px;white-space:nowrap;color:#000;width:68px;height:21px;line-height:21px;text-align:right;"><span class="n">1,900.11</span></div>
<div style="position:absolute;left:27px;top:112px;width:118px;height:18px;filter:blur(0.8px);background:radial-gradient(ellipse 30px 4px at 25px 12px,rgba(150,150,150,.55),rgba(150,150,150,0)),radial-gradient(ellipse 28px 4px at 95px 11px,rgba(150,150,150,.5),rgba(150,150,150,0)),radial-gradient(ellipse 26px 3px at 60px 6px,rgba(160,160,160,.45),rgba(160,160,160,0)),linear-gradient(180deg,rgba(239,239,239,0) 0,#d2d2d2 20%,#dedede 45%,#cbcbcb 70%,#c8c8c8 85%,rgba(239,239,239,0) 100%);"></div>
<div style="position:absolute;left:29px;top:114px;width:113px;height:14px;background:repeating-linear-gradient(90deg,rgba(90,90,90,.18) 0 1px,rgba(255,255,255,.35) 1px 2px);"></div>
<div style="position:absolute;left:141px;top:109px;width:8px;height:20px;overflow:hidden;white-space:nowrap;line-height:20px;color:#000"><span class="k" style="margin-left:-5px">公</span></div>
<div style="position:absolute;left:329px;top:44px;width:92px;height:24px;border:3px solid #54a02b;background:transparent"></div>
<div style="position:absolute;left:416px;top:63px;width:7px;height:7px;background:#fff"></div>
<div style="position:absolute;left:417px;top:64px;width:5px;height:5px;background:#54a02b"></div>
<div style="position:absolute;left:29px;top:310px;width:998px;height:273px;background:#fff;border:1px solid #ababab"></div>
<svg style="position:absolute;left:0;top:0" width="1050" height="583" shape-rendering="crispEdges"><rect x="73" y="482" width="942" height="1" fill="#d9d9d9"/><rect x="73" y="443" width="942" height="1" fill="#d9d9d9"/><rect x="73" y="405" width="942" height="1" fill="#d9d9d9"/><rect x="73" y="366" width="942" height="1" fill="#d9d9d9"/><rect x="73" y="327" width="942" height="1" fill="#d9d9d9"/><rect x="72" y="321" width="944" height="1" fill="#b0b0b0"/><rect x="1015" y="321" width="1" height="201" fill="#b0b0b0"/><rect x="72" y="321" width="1" height="201" fill="#a6a6a6"/><rect x="67" y="521" width="949" height="1" fill="#a6a6a6"/><rect x="67" y="521" width="5" height="1" fill="#a6a6a6"/><rect x="70" y="508" width="2" height="1" fill="#a6a6a6"/><rect x="70" y="495" width="2" height="1" fill="#a6a6a6"/><rect x="67" y="482" width="5" height="1" fill="#a6a6a6"/><rect x="70" y="469" width="2" height="1" fill="#a6a6a6"/><rect x="70" y="456" width="2" height="1" fill="#a6a6a6"/><rect x="67" y="443" width="5" height="1" fill="#a6a6a6"/><rect x="70" y="430" width="2" height="1" fill="#a6a6a6"/><rect x="70" y="418" width="2" height="1" fill="#a6a6a6"/><rect x="67" y="405" width="5" height="1" fill="#a6a6a6"/><rect x="70" y="392" width="2" height="1" fill="#a6a6a6"/><rect x="70" y="379" width="2" height="1" fill="#a6a6a6"/><rect x="67" y="366" width="5" height="1" fill="#a6a6a6"/><rect x="70" y="353" width="2" height="1" fill="#a6a6a6"/><rect x="70" y="340" width="2" height="1" fill="#a6a6a6"/><rect x="67" y="327" width="5" height="1" fill="#a6a6a6"/><rect x="72" y="522" width="1" height="3" fill="#a6a6a6"/><rect x="114" y="522" width="1" height="3" fill="#a6a6a6"/><rect x="157" y="522" width="1" height="3" fill="#a6a6a6"/><rect x="199" y="522" width="1" height="3" fill="#a6a6a6"/><rect x="241" y="522" width="1" height="5" fill="#a6a6a6"/><rect x="284" y="522" width="1" height="3" fill="#a6a6a6"/><rect x="326" y="522" width="1" height="3" fill="#a6a6a6"/><rect x="368" y="522" width="1" height="3" fill="#a6a6a6"/><rect x="411" y="522" width="1" height="3" fill="#a6a6a6"/><rect x="453" y="522" width="1" height="5" fill="#a6a6a6"/><rect x="495" y="522" width="1" height="3" fill="#a6a6a6"/><rect x="538" y="522" width="1" height="3" fill="#a6a6a6"/><rect x="580" y="522" width="1" height="3" fill="#a6a6a6"/><rect x="622" y="522" width="1" height="3" fill="#a6a6a6"/><rect x="665" y="522" width="1" height="5" fill="#a6a6a6"/><rect x="707" y="522" width="1" height="3" fill="#a6a6a6"/><rect x="749" y="522" width="1" height="3" fill="#a6a6a6"/><rect x="792" y="522" width="1" height="3" fill="#a6a6a6"/><rect x="834" y="522" width="1" height="3" fill="#a6a6a6"/><rect x="876" y="522" width="1" height="5" fill="#a6a6a6"/><rect x="919" y="522" width="1" height="3" fill="#a6a6a6"/><rect x="961" y="522" width="1" height="3" fill="#a6a6a6"/><rect x="1003" y="522" width="1" height="3" fill="#a6a6a6"/><rect x="81" y="435" width="19" height="86" fill="#7fd13b"/><rect x="81" y="435" width="19" height="1" fill="#6cb530"/><rect x="81" y="435" width="1" height="86" fill="#6cb530"/><rect x="99" y="435" width="1" height="86" fill="#6cb530"/><rect x="111" y="423" width="19" height="98" fill="#7fd13b"/><rect x="111" y="423" width="19" height="1" fill="#6cb530"/><rect x="111" y="423" width="1" height="98" fill="#6cb530"/><rect x="129" y="423" width="1" height="98" fill="#6cb530"/><rect x="142" y="428" width="19" height="93" fill="#7fd13b"/><rect x="142" y="428" width="19" height="1" fill="#6cb530"/><rect x="142" y="428" width="1" height="93" fill="#6cb530"/><rect x="160" y="428" width="1" height="93" fill="#6cb530"/><rect x="172" y="414" width="19" height="107" fill="#7fd13b"/><rect x="172" y="414" width="19" height="1" fill="#6cb530"/><rect x="172" y="414" width="1" height="107" fill="#6cb530"/><rect x="190" y="414" width="1" height="107" fill="#6cb530"/><rect x="202" y="437" width="19" height="84" fill="#7fd13b"/><rect x="202" y="437" width="19" height="1" fill="#6cb530"/><rect x="202" y="437" width="1" height="84" fill="#6cb530"/><rect x="220" y="437" width="1" height="84" fill="#6cb530"/><rect x="232" y="450" width="19" height="71" fill="#7fd13b"/><rect x="232" y="450" width="19" height="1" fill="#6cb530"/><rect x="232" y="450" width="1" height="71" fill="#6cb530"/><rect x="250" y="450" width="1" height="71" fill="#6cb530"/><rect x="263" y="399" width="19" height="122" fill="#7fd13b"/><rect x="263" y="399" width="19" height="1" fill="#6cb530"/><rect x="263" y="399" width="1" height="122" fill="#6cb530"/><rect x="281" y="399" width="1" height="122" fill="#6cb530"/><rect x="293" y="399" width="19" height="122" fill="#7fd13b"/><rect x="293" y="399" width="19" height="1" fill="#6cb530"/><rect x="293" y="399" width="1" height="122" fill="#6cb530"/><rect x="311" y="399" width="1" height="122" fill="#6cb530"/><rect x="323" y="397" width="19" height="124" fill="#7fd13b"/><rect x="323" y="397" width="19" height="1" fill="#6cb530"/><rect x="323" y="397" width="1" height="124" fill="#6cb530"/><rect x="341" y="397" width="1" height="124" fill="#6cb530"/><rect x="353" y="417" width="19" height="104" fill="#7fd13b"/><rect x="353" y="417" width="19" height="1" fill="#6cb530"/><rect x="353" y="417" width="1" height="104" fill="#6cb530"/><rect x="371" y="417" width="1" height="104" fill="#6cb530"/><rect x="383" y="422" width="19" height="99" fill="#7fd13b"/><rect x="383" y="422" width="19" height="1" fill="#6cb530"/><rect x="383" y="422" width="1" height="99" fill="#6cb530"/><rect x="401" y="422" width="1" height="99" fill="#6cb530"/><rect x="414" y="468" width="19" height="53" fill="#7fd13b"/><rect x="414" y="468" width="19" height="1" fill="#6cb530"/><rect x="414" y="468" width="1" height="53" fill="#6cb530"/><rect x="432" y="468" width="1" height="53" fill="#6cb530"/><rect x="444" y="444" width="19" height="77" fill="#7fd13b"/><rect x="444" y="444" width="19" height="1" fill="#6cb530"/><rect x="444" y="444" width="1" height="77" fill="#6cb530"/><rect x="462" y="444" width="1" height="77" fill="#6cb530"/><rect x="474" y="371" width="19" height="150" fill="#7fd13b"/><rect x="474" y="371" width="19" height="1" fill="#6cb530"/><rect x="474" y="371" width="1" height="150" fill="#6cb530"/><rect x="492" y="371" width="1" height="150" fill="#6cb530"/><rect x="504" y="363" width="19" height="158" fill="#7fd13b"/><rect x="504" y="363" width="19" height="1" fill="#6cb530"/><rect x="504" y="363" width="1" height="158" fill="#6cb530"/><rect x="522" y="363" width="1" height="158" fill="#6cb530"/><rect x="535" y="354" width="19" height="167" fill="#7fd13b"/><rect x="535" y="354" width="19" height="1" fill="#6cb530"/><rect x="535" y="354" width="1" height="167" fill="#6cb530"/><rect x="553" y="354" width="1" height="167" fill="#6cb530"/><rect x="565" y="363" width="19" height="158" fill="#7fd13b"/><rect x="565" y="363" width="19" height="1" fill="#6cb530"/><rect x="565" y="363" width="1" height="158" fill="#6cb530"/><rect x="583" y="363" width="1" height="158" fill="#6cb530"/><rect x="595" y="367" width="19" height="154" fill="#7fd13b"/><rect x="595" y="367" width="19" height="1" fill="#6cb530"/><rect x="595" y="367" width="1" height="154" fill="#6cb530"/><rect x="613" y="367" width="1" height="154" fill="#6cb530"/><rect x="625" y="455" width="19" height="66" fill="#7fd13b"/><rect x="625" y="455" width="19" height="1" fill="#6cb530"/><rect x="625" y="455" width="1" height="66" fill="#6cb530"/><rect x="643" y="455" width="1" height="66" fill="#6cb530"/><rect x="655" y="446" width="19" height="75" fill="#7fd13b"/><rect x="655" y="446" width="19" height="1" fill="#6cb530"/><rect x="655" y="446" width="1" height="75" fill="#6cb530"/><rect x="673" y="446" width="1" height="75" fill="#6cb530"/><rect x="686" y="359" width="19" height="162" fill="#7fd13b"/><rect x="686" y="359" width="19" height="1" fill="#6cb530"/><rect x="686" y="359" width="1" height="162" fill="#6cb530"/><rect x="704" y="359" width="1" height="162" fill="#6cb530"/><rect x="716" y="365" width="19" height="156" fill="#7fd13b"/><rect x="716" y="365" width="19" height="1" fill="#6cb530"/><rect x="716" y="365" width="1" height="156" fill="#6cb530"/><rect x="734" y="365" width="1" height="156" fill="#6cb530"/><rect x="746" y="353" width="19" height="168" fill="#7fd13b"/><rect x="746" y="353" width="19" height="1" fill="#6cb530"/><rect x="746" y="353" width="1" height="168" fill="#6cb530"/><rect x="764" y="353" width="1" height="168" fill="#6cb530"/><rect x="776" y="346" width="19" height="175" fill="#7fd13b"/><rect x="776" y="346" width="19" height="1" fill="#6cb530"/><rect x="776" y="346" width="1" height="175" fill="#6cb530"/><rect x="794" y="346" width="1" height="175" fill="#6cb530"/><rect x="806" y="370" width="19" height="151" fill="#7fd13b"/><rect x="806" y="370" width="19" height="1" fill="#6cb530"/><rect x="806" y="370" width="1" height="151" fill="#6cb530"/><rect x="824" y="370" width="1" height="151" fill="#6cb530"/><rect x="837" y="396" width="19" height="125" fill="#7fd13b"/><rect x="837" y="396" width="19" height="1" fill="#6cb530"/><rect x="837" y="396" width="1" height="125" fill="#6cb530"/><rect x="855" y="396" width="1" height="125" fill="#6cb530"/><rect x="867" y="396" width="19" height="125" fill="#7fd13b"/><rect x="867" y="396" width="19" height="1" fill="#6cb530"/><rect x="867" y="396" width="1" height="125" fill="#6cb530"/><rect x="885" y="396" width="1" height="125" fill="#6cb530"/><rect x="897" y="347" width="19" height="174" fill="#7fd13b"/><rect x="897" y="347" width="19" height="1" fill="#6cb530"/><rect x="897" y="347" width="1" height="174" fill="#6cb530"/><rect x="915" y="347" width="1" height="174" fill="#6cb530"/><rect x="927" y="339" width="19" height="182" fill="#7fd13b"/><rect x="927" y="339" width="19" height="1" fill="#6cb530"/><rect x="927" y="339" width="1" height="182" fill="#6cb530"/><rect x="945" y="339" width="1" height="182" fill="#6cb530"/><rect x="958" y="350" width="19" height="171" fill="#7fd13b"/><rect x="958" y="350" width="19" height="1" fill="#6cb530"/><rect x="958" y="350" width="1" height="171" fill="#6cb530"/><rect x="976" y="350" width="1" height="171" fill="#6cb530"/><rect x="988" y="400" width="19" height="121" fill="#7fd13b"/><rect x="988" y="400" width="19" height="1" fill="#6cb530"/><rect x="988" y="400" width="1" height="121" fill="#6cb530"/><rect x="1006" y="400" width="1" height="121" fill="#6cb530"/><line x1="90.5" y1="429" x2="90.5" y2="435" stroke="#9ccc74" stroke-width="1" shape-rendering="auto"/><line x1="117.5" y1="414" x2="120.5" y2="423" stroke="#9ccc74" stroke-width="1" shape-rendering="auto"/><line x1="149.5" y1="419" x2="151.5" y2="428" stroke="#9ccc74" stroke-width="1" shape-rendering="auto"/><line x1="181.5" y1="405" x2="181.5" y2="414" stroke="#9ccc74" stroke-width="1" shape-rendering="auto"/><line x1="209.5" y1="428" x2="211.5" y2="437" stroke="#9ccc74" stroke-width="1" shape-rendering="auto"/><line x1="241.5" y1="441" x2="241.5" y2="450" stroke="#9ccc74" stroke-width="1" shape-rendering="auto"/><line x1="268.5" y1="390" x2="272.5" y2="399" stroke="#9ccc74" stroke-width="1" shape-rendering="auto"/><line x1="300.5" y1="390" x2="302.5" y2="399" stroke="#9ccc74" stroke-width="1" shape-rendering="auto"/><line x1="332.5" y1="388" x2="332.5" y2="397" stroke="#9ccc74" stroke-width="1" shape-rendering="auto"/><line x1="360.5" y1="408" x2="362.5" y2="417" stroke="#9ccc74" stroke-width="1" shape-rendering="auto"/><line x1="392.5" y1="413" x2="392.5" y2="422" stroke="#9ccc74" stroke-width="1" shape-rendering="auto"/><line x1="423.5" y1="459" x2="423.5" y2="468" stroke="#9ccc74" stroke-width="1" shape-rendering="auto"/><line x1="453.5" y1="435" x2="453.5" y2="444" stroke="#9ccc74" stroke-width="1" shape-rendering="auto"/><line x1="475.5" y1="362" x2="483.5" y2="371" stroke="#9ccc74" stroke-width="1" shape-rendering="auto"/><line x1="513.5" y1="360" x2="513.5" y2="363" stroke="#9ccc74" stroke-width="1" shape-rendering="auto"/><line x1="544.5" y1="345" x2="544.5" y2="354" stroke="#9ccc74" stroke-width="1" shape-rendering="auto"/><line x1="574.5" y1="360" x2="574.5" y2="363" stroke="#9ccc74" stroke-width="1" shape-rendering="auto"/><line x1="612.5" y1="358" x2="604.5" y2="367" stroke="#9ccc74" stroke-width="1" shape-rendering="auto"/><line x1="634.5" y1="446" x2="634.5" y2="455" stroke="#9ccc74" stroke-width="1" shape-rendering="auto"/><line x1="666.5" y1="437" x2="664.5" y2="446" stroke="#9ccc74" stroke-width="1" shape-rendering="auto"/><line x1="695.5" y1="350" x2="695.5" y2="359" stroke="#9ccc74" stroke-width="1" shape-rendering="auto"/><line x1="733.5" y1="356" x2="725.5" y2="365" stroke="#9ccc74" stroke-width="1" shape-rendering="auto"/><line x1="755.5" y1="341" x2="755.5" y2="353" stroke="#9ccc74" stroke-width="1" shape-rendering="auto"/><line x1="793.5" y1="338" x2="785.5" y2="346" stroke="#9ccc74" stroke-width="1" shape-rendering="auto"/><line x1="816.5" y1="361" x2="815.5" y2="370" stroke="#9ccc74" stroke-width="1" shape-rendering="auto"/><line x1="846.5" y1="387" x2="846.5" y2="396" stroke="#9ccc74" stroke-width="1" shape-rendering="auto"/><line x1="878.5" y1="387" x2="876.5" y2="396" stroke="#9ccc74" stroke-width="1" shape-rendering="auto"/><line x1="906.5" y1="338" x2="906.5" y2="347" stroke="#9ccc74" stroke-width="1" shape-rendering="auto"/><line x1="944.5" y1="337" x2="936.5" y2="339" stroke="#9ccc74" stroke-width="1" shape-rendering="auto"/><line x1="967.5" y1="352" x2="967.5" y2="350" stroke="#9ccc74" stroke-width="1" shape-rendering="auto"/><line x1="997.5" y1="391" x2="997.5" y2="400" stroke="#9ccc74" stroke-width="1" shape-rendering="auto"/></svg>
<div style="position:absolute;left:74px;top:413px;width:33px;height:16px;border:1px solid #6bb132;background:#fff;color:#5aa52a;font-size:11px;line-height:14px;text-align:center;will-change:transform;">667.2</div>
<div style="position:absolute;left:101px;top:398px;width:33px;height:16px;border:1px solid #6bb132;background:#fff;color:#5aa52a;font-size:11px;line-height:14px;text-align:center;will-change:transform;">756.0</div>
<div style="position:absolute;left:133px;top:403px;width:33px;height:16px;border:1px solid #6bb132;background:#fff;color:#5aa52a;font-size:11px;line-height:14px;text-align:center;will-change:transform;">716.4</div>
<div style="position:absolute;left:165px;top:389px;width:33px;height:16px;border:1px solid #6bb132;background:#fff;color:#5aa52a;font-size:11px;line-height:14px;text-align:center;will-change:transform;">831.6</div>
<div style="position:absolute;left:193px;top:412px;width:33px;height:16px;border:1px solid #6bb132;background:#fff;color:#5aa52a;font-size:11px;line-height:14px;text-align:center;will-change:transform;">650.4</div>
<div style="position:absolute;left:225px;top:425px;width:33px;height:16px;border:1px solid #6bb132;background:#fff;color:#5aa52a;font-size:11px;line-height:14px;text-align:center;will-change:transform;">549.6</div>
<div style="position:absolute;left:252px;top:374px;width:33px;height:16px;border:1px solid #6bb132;background:#fff;color:#5aa52a;font-size:11px;line-height:14px;text-align:center;will-change:transform;">943.3</div>
<div style="position:absolute;left:284px;top:374px;width:33px;height:16px;border:1px solid #6bb132;background:#fff;color:#5aa52a;font-size:11px;line-height:14px;text-align:center;will-change:transform;">942.0</div>
<div style="position:absolute;left:316px;top:372px;width:33px;height:16px;border:1px solid #6bb132;background:#fff;color:#5aa52a;font-size:11px;line-height:14px;text-align:center;will-change:transform;">962.4</div>
<div style="position:absolute;left:344px;top:392px;width:33px;height:16px;border:1px solid #6bb132;background:#fff;color:#5aa52a;font-size:11px;line-height:14px;text-align:center;will-change:transform;">803.7</div>
<div style="position:absolute;left:376px;top:397px;width:33px;height:16px;border:1px solid #6bb132;background:#fff;color:#5aa52a;font-size:11px;line-height:14px;text-align:center;will-change:transform;">765.9</div>
<div style="position:absolute;left:407px;top:443px;width:33px;height:16px;border:1px solid #6bb132;background:#fff;color:#5aa52a;font-size:11px;line-height:14px;text-align:center;will-change:transform;">412.8</div>
<div style="position:absolute;left:437px;top:419px;width:33px;height:16px;border:1px solid #6bb132;background:#fff;color:#5aa52a;font-size:11px;line-height:14px;text-align:center;will-change:transform;">597.6</div>
<div style="position:absolute;left:456px;top:346px;width:39px;height:16px;border:1px solid #6bb132;background:#fff;color:#5aa52a;font-size:11px;line-height:14px;text-align:center;will-change:transform;">1159.2</div>
<div style="position:absolute;left:494px;top:344px;width:39px;height:16px;border:1px solid #6bb132;background:#fff;color:#5aa52a;font-size:11px;line-height:14px;text-align:center;will-change:transform;">1219.2</div>
<div style="position:absolute;left:525px;top:329px;width:39px;height:16px;border:1px solid #6bb132;background:#fff;color:#5aa52a;font-size:11px;line-height:14px;text-align:center;will-change:transform;">1294.8</div>
<div style="position:absolute;left:555px;top:344px;width:39px;height:16px;border:1px solid #6bb132;background:#fff;color:#5aa52a;font-size:11px;line-height:14px;text-align:center;will-change:transform;">1222.8</div>
<div style="position:absolute;left:593px;top:342px;width:39px;height:16px;border:1px solid #6bb132;background:#fff;color:#5aa52a;font-size:11px;line-height:14px;text-align:center;will-change:transform;">1191.6</div>
<div style="position:absolute;left:618px;top:430px;width:33px;height:16px;border:1px solid #6bb132;background:#fff;color:#5aa52a;font-size:11px;line-height:14px;text-align:center;will-change:transform;">508.8</div>
<div style="position:absolute;left:650px;top:421px;width:33px;height:16px;border:1px solid #6bb132;background:#fff;color:#5aa52a;font-size:11px;line-height:14px;text-align:center;will-change:transform;">584.4</div>
<div style="position:absolute;left:676px;top:334px;width:39px;height:16px;border:1px solid #6bb132;background:#fff;color:#5aa52a;font-size:11px;line-height:14px;text-align:center;will-change:transform;">1254.0</div>
<div style="position:absolute;left:714px;top:340px;width:39px;height:16px;border:1px solid #6bb132;background:#fff;color:#5aa52a;font-size:11px;line-height:14px;text-align:center;will-change:transform;">1208.4</div>
<div style="position:absolute;left:736px;top:325px;width:39px;height:16px;border:1px solid #6bb132;background:#fff;color:#5aa52a;font-size:11px;line-height:14px;text-align:center;will-change:transform;">1296.0</div>
<div style="position:absolute;left:774px;top:322px;width:39px;height:16px;border:1px solid #6bb132;background:#fff;color:#5aa52a;font-size:11px;line-height:14px;text-align:center;will-change:transform;">1357.2</div>
<div style="position:absolute;left:797px;top:345px;width:39px;height:16px;border:1px solid #6bb132;background:#fff;color:#5aa52a;font-size:11px;line-height:14px;text-align:center;will-change:transform;">1169.8</div>
<div style="position:absolute;left:830px;top:371px;width:33px;height:16px;border:1px solid #6bb132;background:#fff;color:#5aa52a;font-size:11px;line-height:14px;text-align:center;will-change:transform;">970.7</div>
<div style="position:absolute;left:862px;top:371px;width:33px;height:16px;border:1px solid #6bb132;background:#fff;color:#5aa52a;font-size:11px;line-height:14px;text-align:center;will-change:transform;">970.7</div>
<div style="position:absolute;left:887px;top:322px;width:39px;height:16px;border:1px solid #6bb132;background:#fff;color:#5aa52a;font-size:11px;line-height:14px;text-align:center;will-change:transform;">1349.2</div>
<div style="position:absolute;left:925px;top:321px;width:39px;height:16px;border:1px solid #6bb132;background:#fff;color:#5aa52a;font-size:11px;line-height:14px;text-align:center;will-change:transform;">1407.6</div>
<div style="position:absolute;left:948px;top:336px;width:39px;height:16px;border:1px solid #6bb132;background:#fff;color:#5aa52a;font-size:11px;line-height:14px;text-align:center;will-change:transform;">1326.0</div>
<div style="position:absolute;left:981px;top:375px;width:33px;height:16px;border:1px solid #6bb132;background:#fff;color:#5aa52a;font-size:11px;line-height:14px;text-align:center;will-change:transform;">939.6</div>
<div style="position:absolute;left:21px;top:514px;white-space:nowrap;font-size:11px;color:#333;letter-spacing:0.4px;will-change:transform;width:41px;height:14px;line-height:14px;text-align:right;">0</div>
<div style="position:absolute;left:21px;top:475px;white-space:nowrap;font-size:11px;color:#333;letter-spacing:0.4px;will-change:transform;width:41px;height:14px;line-height:14px;text-align:right;">300</div>
<div style="position:absolute;left:21px;top:436px;white-space:nowrap;font-size:11px;color:#333;letter-spacing:0.4px;will-change:transform;width:41px;height:14px;line-height:14px;text-align:right;">600</div>
<div style="position:absolute;left:21px;top:398px;white-space:nowrap;font-size:11px;color:#333;letter-spacing:0.4px;will-change:transform;width:41px;height:14px;line-height:14px;text-align:right;">900</div>
<div style="position:absolute;left:21px;top:359px;white-space:nowrap;font-size:11px;color:#333;letter-spacing:0.4px;will-change:transform;width:41px;height:14px;line-height:14px;text-align:right;">1200</div>
<div style="position:absolute;left:21px;top:320px;white-space:nowrap;font-size:11px;color:#333;letter-spacing:0.4px;will-change:transform;width:41px;height:14px;line-height:14px;text-align:right;">1500</div>
<div style="position:absolute;left:201px;top:530px;white-space:nowrap;font-size:11px;color:#333;letter-spacing:0.3px;will-change:transform;width:80px;height:14px;line-height:14px;text-align:center;">2015/12/6</div>
<div style="position:absolute;left:412px;top:530px;white-space:nowrap;font-size:11px;color:#333;letter-spacing:0.3px;will-change:transform;width:80px;height:14px;line-height:14px;text-align:center;">2015/12/13</div>
<div style="position:absolute;left:624px;top:530px;white-space:nowrap;font-size:11px;color:#333;letter-spacing:0.3px;will-change:transform;width:80px;height:14px;line-height:14px;text-align:center;">2015/12/20</div>
<div style="position:absolute;left:836px;top:530px;white-space:nowrap;font-size:11px;color:#333;letter-spacing:0.3px;will-change:transform;width:80px;height:14px;line-height:14px;text-align:center;">2015/12/27</div>
<div style="position:absolute;left:404px;top:550px;width:247px;height:22px;border:1px solid #a6a6a6;background:#fff"></div>
<div style="position:absolute;left:408px;top:554px;width:18px;height:14px;background:#7fd13b;border:1px solid #6cb530"></div>
<div style="position:absolute;left:430px;top:551px;white-space:nowrap;font-size:12px;color:#222;letter-spacing:0.25px;height:20px;line-height:20px;">安科瑞电气股份有限公司 | 进线 | 千瓦时</div>
</body></html>
